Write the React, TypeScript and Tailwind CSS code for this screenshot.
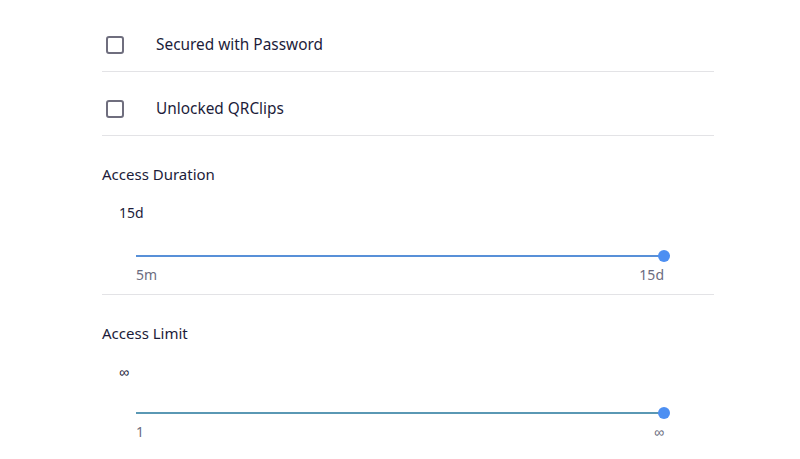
import React from "react";

function Check({ label }: { label: string }) {
  return (
    <div className="flex items-center h-16 pt-[11px] border-b border-[#e3e3e6]">
      <div className="ml-1 w-[18px] h-[18px] border-2 border-[#6f6e7e] rounded-[3px]" />
      <span className="ml-8 text-[15.4px] text-[#1c1c3a]">{label}</span>
    </div>
  );
}

function Slider({
  title,
  value,
  min,
  max,
  track,
  divider,
  trackGap,
}: {
  title: string;
  value: string;
  min: string;
  max: string;
  track: string;
  divider: boolean;
  trackGap: number;
}) {
  return (
    <div className={divider ? "border-b border-[#e3e3e6] pb-[9px]" : ""}>
      <div className="pt-[28px] text-[15px] leading-5 text-[#1c1c3a]">{title}</div>
      <div className="mt-[19px] ml-[17px] text-[14px] leading-5 text-[#1c1c3a]">{value}</div>
      <div
        className={
          (trackGap === 32 ? "mt-[32px]" : "mt-[30px]") + " ml-[34px] mr-[50px] relative h-[2px]"
        }
        style={{ background: track }}
      >
        <div className="absolute right-[-6px] top-[-5px] w-3 h-3 rounded-full bg-[#4d8ff2]" />
      </div>
      <div className="ml-[34px] mr-[50px] mt-[8px] flex justify-between text-[14px] leading-5 text-[#6c6c80]">
        <span>{min}</span>
        <span>{max}</span>
      </div>
    </div>
  );
}

export default function App() {
  return (
    <div className="w-[800px] h-[459px] bg-white overflow-hidden" style={{ fontFamily: '"Noto Sans", sans-serif' }}>
      <div className="ml-[102px] w-[612px] pt-[8px]">
        <Check label="Secured with Password" />
        <Check label="Unlocked QRClips" />
        <Slider title="Access Duration" value="15d" min="5m" max="15d" track="#5890d8" divider trackGap={32} />
        <Slider title="Access Limit" value="∞" min="1" max="∞" track="#5a98b4" divider={false} trackGap={30} />
      </div>
    </div>
  );
}
